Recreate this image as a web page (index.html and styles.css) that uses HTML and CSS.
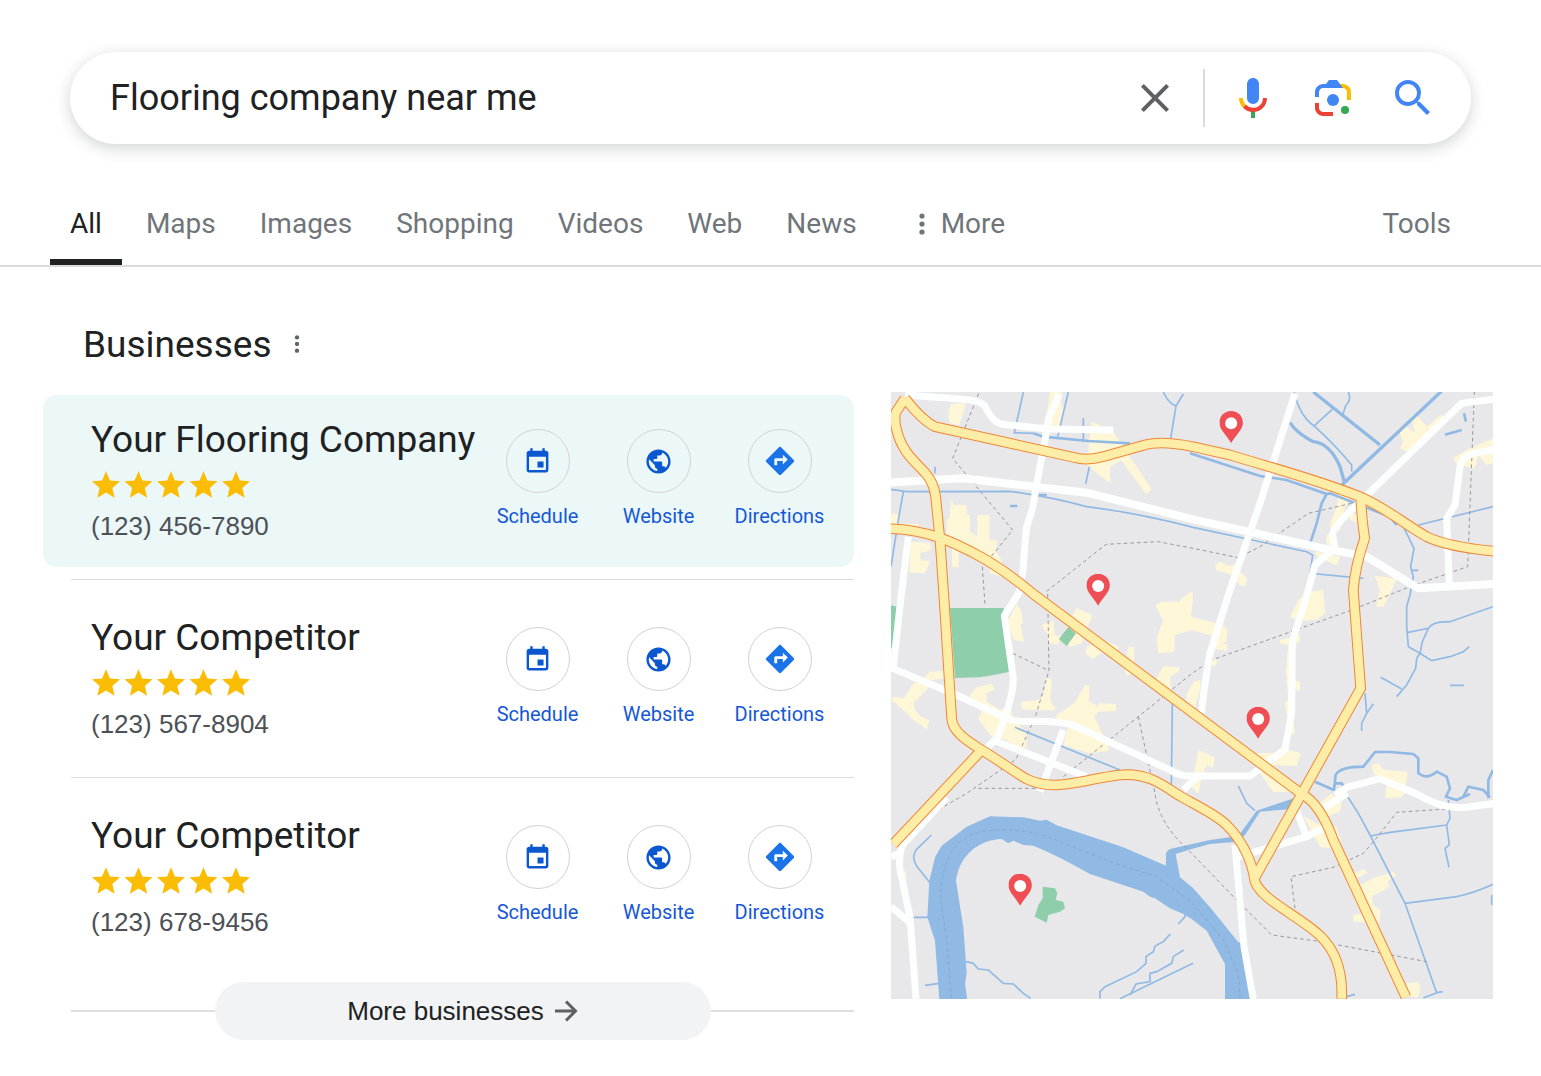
FILE: index.html
```
<!DOCTYPE html>
<html lang="en">
<head>
    <meta charset="UTF-8">
    <meta name="viewport" content="width=device-width, initial-scale=1.0">
    <title>Flooring company near me</title>
    <link rel="stylesheet" href="styles.css">
</head>
<body>

    <!-- Shared icons -->
    <svg class="sprite" aria-hidden="true">
        <symbol id="icon-schedule" viewBox="0 0 24 24">
            <path d="M17 12h-5v5h5v-5zM16 1v2H8V1H6v2H5c-1.11 0-1.99.9-1.99 2L3 19c0 1.1.89 2 2 2h14c1.1 0 2-.9 2-2V5c0-1.1-.9-2-2-2h-1V1h-2zm3 18H5V8h14v11z"/>
        </symbol>
        <symbol id="icon-website" viewBox="0 0 24 24">
            <path d="M12 2C6.48 2 2 6.48 2 12s4.48 10 10 10 10-4.48 10-10S17.52 2 12 2zm-1 17.93c-3.95-.49-7-3.85-7-7.93 0-.62.08-1.21.21-1.79L9 15v1c0 1.1.9 2 2 2v1.93zm6.9-2.54c-.26-.81-1-1.39-1.9-1.39h-1v-3c0-.55-.45-1-1-1H8v-2h2c.55 0 1-.45 1-1V7h2c1.1 0 2-.9 2-2v-.41c2.93 1.19 5 4.06 5 7.41 0 2.08-.8 3.97-2.1 5.39z"/>
        </symbol>
        <symbol id="icon-directions" viewBox="0 0 24 24">
            <path d="M21.71 11.29l-9-9c-.39-.39-1.02-.39-1.41 0l-9 9c-.39.39-.39 1.02 0 1.41l9 9c.39.39 1.02.39 1.41 0l9-9c.39-.38.39-1.01 0-1.41zM14 14.5V12h-4v3H8v-4c0-.55.45-1 1-1h5V7.5l3.5 3.5-3.5 3.5z"/>
        </symbol>
        <symbol id="star" viewBox="2 2 20 19">
            <path d="M12 17.27L18.18 21l-1.64-7.03L22 9.24l-7.19-.61L12 2 9.19 8.63 2 9.24l5.46 4.73L5.82 21z"/>
        </symbol>
        <symbol id="stars" viewBox="0 0 158 28">
            <use href="#star" x="0" width="28" height="27"/>
            <use href="#star" x="32.5" width="28" height="27"/>
            <use href="#star" x="65" width="28" height="27"/>
            <use href="#star" x="97.5" width="28" height="27"/>
            <use href="#star" x="130" width="28" height="27"/>
        </symbol>
        <symbol id="dots" viewBox="0 0 6 24">
            <circle cx="3" cy="4" r="2.6"/>
            <circle cx="3" cy="12" r="2.6"/>
            <circle cx="3" cy="20" r="2.6"/>
        </symbol>
    </svg>

    <header>
        <form class="search">
            <input class="search-input" type="text" value="Flooring company near me" aria-label="Search">
            <button class="search-btn clear" type="button" aria-label="Clear">
                <svg viewBox="0 0 24 24"><path fill="#5f6062" d="M19 6.41L17.59 5 12 10.59 6.41 5 5 6.41 10.59 12 5 17.59 6.41 19 12 13.41 17.59 19 19 17.59 13.41 12z"/></svg>
            </button>
            <button class="search-btn" type="button" aria-label="Search by voice">
                <svg viewBox="0 0 24 24">
                    <path fill="#4285f4" d="M12 15c1.66 0 3-1.31 3-2.97V5.01C15 3.34 13.66 2 12 2S9 3.34 9 5.01v7.02C9 13.69 10.34 15 12 15z"/>
                    <path fill="#34a853" d="M11 18.08h2V22h-2z"/>
                    <path fill="#fbbc05" d="M7.05 16.87C5.78 15.54 5 14.04 5 12h2c0 1.45.56 2.42 1.47 3.38v.32l-1.15 1.18z"/>
                    <path fill="#ea4335" d="M12 16.93a4.97 5.25 0 0 1-3.54-1.55l-1.41 1.49C8.31 18.21 10.07 19 12 19c3.87 0 6.99-2.92 6.99-7H17c0 2.92-2.24 4.93-5 4.93z"/>
                </svg>
            </button>
            <button class="search-btn" type="button" aria-label="Search by image">
                <svg viewBox="0 0 192 192">
                    <circle fill="#34a853" cx="144" cy="144" r="16"/>
                    <circle fill="#4285f4" cx="96" cy="104" r="24"/>
                    <path fill="#ea4335" d="M24 135.2C24 153.3 38.7 168 56.8 168H96v-16l-40.1-.1c-8.8 0-15.9-8.2-15.9-17.9v-18H24z"/>
                    <path fill="#fbbc04" d="M168 72.8C168 54.7 153.3 40 135.2 40H116l20 16c8.8 0 15.9 8.3 15.9 18v30h16z"/>
                    <path fill="#4285f4" d="M112 24H80L68 40H56.8C38.7 40 24 54.7 24 72.8V92h16V74c0-9.7 7.1-18 15.9-18H136z"/>
                </svg>
            </button>
            <button class="search-btn" type="submit" aria-label="Search">
                <svg viewBox="0 0 24 24"><path fill="#4285f4" d="M15.5 14h-.79l-.28-.27A6.47 6.47 0 0 0 16 9.500 6.500 6.500 0 1 0 9.500 16c1.610 0 3.090-.59 4.230-1.570l.27.28v.79l5 4.990L20.490 19l-4.990-5zm-6 0C7.010 14 5 11.990 5 9.500S7.010 5 9.500 5 14 7.010 14 9.500 11.990 14 9.500 14z"/></svg>
            </button>
        </form>

        <nav class="tabs">
            <a class="tab active" href="#">All</a>
            <a class="tab" href="#">Maps</a>
            <a class="tab" href="#">Images</a>
            <a class="tab" href="#">Shopping</a>
            <a class="tab" href="#">Videos</a>
            <a class="tab" href="#">Web</a>
            <a class="tab" href="#">News</a>
            <button class="tab more" type="button"><svg class="tab-dots"><use href="#dots"/></svg>More</button>
            <button class="tab tools" type="button">Tools</button>
        </nav>
    </header>

    <main class="results">
        <section class="businesses">
            <div class="heading">
                <h1>Businesses</h1>
                <button class="menu-btn" type="button" aria-label="Options"><svg><use href="#dots"/></svg></button>
            </div>

            <article class="business featured">
                <div class="info">
                    <h2>Your Flooring Company</h2>
                    <svg class="stars" role="img" aria-label="5 stars"><use href="#stars"/></svg>
                    <p>(123) 456-7890</p>
                </div>
                <div class="actions">
                    <a href="#"><span class="circle"><svg><use href="#icon-schedule"/></svg></span>Schedule</a>
                    <a href="#"><span class="circle"><svg><use href="#icon-website"/></svg></span>Website</a>
                    <a href="#"><span class="circle directions"><svg><use href="#icon-directions"/></svg></span>Directions</a>
                </div>
            </article>
            <hr>
            <article class="business">
                <div class="info">
                    <h2>Your Competitor</h2>
                    <svg class="stars" role="img" aria-label="5 stars"><use href="#stars"/></svg>
                    <p>(123) 567-8904</p>
                </div>
                <div class="actions">
                    <a href="#"><span class="circle"><svg><use href="#icon-schedule"/></svg></span>Schedule</a>
                    <a href="#"><span class="circle"><svg><use href="#icon-website"/></svg></span>Website</a>
                    <a href="#"><span class="circle directions"><svg><use href="#icon-directions"/></svg></span>Directions</a>
                </div>
            </article>
            <hr>
            <article class="business">
                <div class="info">
                    <h2>Your Competitor</h2>
                    <svg class="stars" role="img" aria-label="5 stars"><use href="#stars"/></svg>
                    <p>(123) 678-9456</p>
                </div>
                <div class="actions">
                    <a href="#"><span class="circle"><svg><use href="#icon-schedule"/></svg></span>Schedule</a>
                    <a href="#"><span class="circle"><svg><use href="#icon-website"/></svg></span>Website</a>
                    <a href="#"><span class="circle directions"><svg><use href="#icon-directions"/></svg></span>Directions</a>
                </div>
            </article>

            <div class="more-row">
                <button class="more-btn" type="button">
                    More businesses
                    <svg viewBox="0 0 24 24"><path d="M1 12h20M12 2.500L21.500 12L12 21.500" fill="none" stroke="#5f6062" stroke-width="3"/></svg>
                </button>
            </div>
        </section>

        <svg class="map" viewBox="3 6 1806 1821" role="img" aria-label="Map of businesses">
            <defs>
                <symbol id="pin" viewBox="0 0 70 96">
                    <path fill="#f04e55" d="M35 0C15 0 0 15 0 35c0 22 20 34 35 61 15-27 35-39 35-61C70 15 55 0 35 0z"/>
                    <circle fill="#fff" cx="35" cy="37" r="18"/>
                </symbol>
                <g id="main-roads">
                    <path d="M45 25L17 68Q12 90 20 120C35 185 75 215 105 248Q132 278 137 320L150 450L163 640L185 985C187 1030 245 1060 275 1080C340 1120 380 1150 410 1167C470 1195 520 1185 590 1172C650 1160 680 1154 710 1154C790 1154 830 1195 875 1221C930 1252 980 1275 1010 1305C1050 1345 1085 1405 1095 1475C1115 1530 1230 1580 1290 1637C1345 1690 1358 1755 1355 1826"/>
                    <path d="M-5 416C110 418 190 455 275 502C330 533 380 570 430 612L1235 1212Q1290 1240 1330 1350L1548 1822"/>
                    <path d="M45 25Q95 90 135 110L555 203Q590 213 640 200L760 166Q810 150 909 170L1020 195C1150 235 1270 265 1410 320C1490 355 1540 400 1610 440Q1670 470 1815 484"/>
                    <path d="M1412 325Q1417 400 1424 445Q1395 530 1390 600L1412 895L1095 1462"/>
                    <path d="M275 1080L10 1362"/>
                </g>
            </defs>

            <rect x="3" y="6" width="1806" height="1821" fill="#e8e8ea"/>

            <!-- Built-up areas -->
            <g fill="#fef7d7">
                <path d="M183 42L228 38L208 106L178 98L175 70zM480 6L515 6L512 40L522 62L508 108L460 106L472 62z"/>
                <path d="M605 95L670 125L710 185L785 298L768 312L693 210L660 232V280L590 225z"/>
                <path d="M183 327L192 345L230 346V373L240 376V425L265 440V495L206 480V532L186 530V445L170 443V388L178 386zM262 376L298 374V450L322 452L318 485L335 512V560L300 550V510L262 475zM3 372L30 370L25 400L85 402L80 425L3 420z"/>
                <path d="M62 455L120 458L123 480L90 490L92 512L120 512L105 550L58 548z"/>
                <path d="M350 700L380 642L395 665L398 700L390 705L403 755L372 750L360 720zM455 705L490 692L494 735L512 738L505 762L475 760L474 735zM560 655L607 675L590 720L575 760L538 770L515 740zM590 770L640 750L685 768L682 790L638 785L608 808L586 790zM714 772L733 770L731 838L712 860L704 840z"/>
                <path d="M795 645L815 635L868 635L880 620L908 603V630L903 680L1000 705L1013 722L1008 755L995 762L1012 762V782L960 775L975 740L905 720L855 735L853 785L805 790L800 745L820 690z"/>
                <path d="M120 845L162 842V866L120 870L115 893L70 940L75 960L90 978L118 990L110 1017L70 990L40 960L5 930L8 920L42 925L70 880L90 875z"/>
                <path d="M240 915L260 892L305 882L314 898L290 910V935L330 960L360 945L370 985L410 1030V1072L390 1075L350 1050L300 1035L265 985L275 965L250 940z"/>
                <path d="M395 935L445 930L460 915L470 865L485 867L480 930L497 955L490 962L395 958zM500 975L555 937L585 885L597 887V935L625 950V940L678 942V962L625 965L612 980L625 1005L640 1040L655 1065V1082L600 1090L520 1065L535 1010L500 995z"/>
                <path d="M780 880L800 865L820 828L868 832V842L840 860L845 930L780 890zM890 910L912 875L932 870L930 900L910 965L890 935z"/>
                <path d="M975 525L990 515L1018 528L1050 518V545L1072 565L1065 588L1048 585L1030 555L978 540zM1345 305L1383 318L1365 352L1348 425L1318 410L1340 350zM1380 370L1440 385L1425 405L1380 390zM1275 485L1350 500L1340 525L1285 505zM1310 435H1330L1340 475L1310 465zM1370 487L1400 485L1390 500z"/>
                <path d="M1522 115L1545 108L1575 130L1562 78L1585 82L1612 110L1650 75L1670 80L1590 155L1565 190L1530 175L1540 155zM1690 205L1730 180L1809 145V220L1790 225L1765 195L1755 235L1700 225zM1455 558L1520 565L1510 590L1480 650L1458 650L1470 600z"/>
                <path d="M1255 605L1300 600L1305 670L1280 690L1230 692L1200 680L1225 630zM1170 750L1230 735L1230 755L1210 765V870L1230 875V900L1210 902V990L1215 1030L1200 1035L1185 940L1195 930L1188 840L1195 765L1170 760zM960 805L982 810L978 828L955 825z"/>
                <path d="M925 1080L975 1102L968 1135L950 1125L935 1160L925 1212L905 1190zM1100 1090L1160 1088L1178 1075L1232 1090L1220 1128L1150 1125L1195 1180L1230 1205L1150 1206L1110 1150z"/>
                <path d="M1445 1125L1465 1120L1482 1140L1553 1145L1545 1210L1535 1222L1485 1225L1490 1185L1450 1150zM1290 1240L1325 1210L1355 1240L1350 1265L1310 1280zM1240 1278L1300 1310L1340 1310L1355 1360L1320 1375L1290 1370zM1390 1452L1420 1436L1432 1448L1400 1465zM1410 1485L1450 1465L1510 1445L1518 1455L1492 1475L1500 1490L1445 1520L1450 1545L1472 1560L1468 1600L1390 1595V1575L1420 1570z"/>
                <path d="M1550 1780L1585 1777L1592 1795L1585 1822L1560 1820zM40 1440L50 1450L45 1485z"/>
            </g>

            <!-- Parks -->
            <g fill="#8fceaa">
                <path d="M180 654H342L335 680L358 845Q300 858 265 862L195 864zM3 646L22 650L8 770L3 775z"/>
                <path d="M535 710L558 730L530 769L507 747z"/>
                <path d="M458 1490L495 1495L502 1510L497 1530L520 1535L525 1555L510 1565L475 1575L470 1598L434 1580L445 1545L458 1525z"/>
            </g>

            <!-- River -->
            <path fill="#90bae4" d="M148 1830L135 1652L112 1582L118 1472L135 1402L155 1367L230 1310L300 1279L400 1282L450 1292L470 1289L500 1306L700 1372L828 1427V1392Q830 1378 850 1375L960 1350L1045 1338L1100 1262L1220 1222L1230 1232L1195 1258L1110 1265L1065 1335L1040 1355L960 1362L905 1377L857 1392L870 1462L909 1494L960 1552L1045 1657H1060V1690L1085 1830H1005V1722L950 1622L905 1587L880 1572L840 1555L795 1525L780 1520L760 1505L600 1452Q500 1395 430 1367L400 1365L370 1352L355 1360L335 1347C270 1350 210 1390 198 1472L220 1612L230 1750L225 1780L232 1830z"/>

            <!-- Streams -->
            <g class="streams">
                <path class="canal" d="M1270 6L1470 165M1655 3L1350 290"/>
                <path d="M400 6L373 128L430 130M535 6L503 140M580 85V155M1212 6Q1230 80 1275 110Q1340 170 1385 225V245M1330 55L1270 110M1375 6Q1385 30 1368 45L1358 75M3 298L50 305L360 304Q480 320 590 350Q750 370 909 412L1250 485L1268 495L1260 550L1420 565M40 305L25 390L3 530M598 230L587 282M375 1012L690 1140M847 940L844 1185M820 6Q835 40 858 48L842 145M880 12L858 48M135 230V250"/>
                <path class="brook" d="M430 130L460 140L595 153L720 160M360 348H382M430 315H470M900 190L1110 258L1190 270L1310 312L1320 310L1500 380L1520 405M1665 134L1715 120M1722 70L1728 95M1310 312L1295 340L1280 400L1262 455"/>
                <path class="canal" d="M1200 98Q1220 130 1270 155Q1320 160 1350 230L1363 275"/>
                <path d="M1585 405L1809 350M1540 410L1572 475L1562 530L1570 560L1560 615L1550 650V710L1555 770L1590 790L1625 812L1680 800L1720 785L1738 770M1550 728L1615 715L1625 705Q1640 695 1680 695L1809 650M1615 715L1597 755L1590 790L1580 805L1577 835L1550 885L1520 920M1472 862L1535 897M1680 886H1722M1425 910L1430 970L1415 1000V1022M1430 970L1450 942M1562 541H1585"/>
                <path class="brook" d="M1275 1175L1332 1200L1337 1155Q1350 1130 1420 1130L1440 1105L1455 1086H1500L1570 1092L1585 1105V1150Q1610 1170 1640 1145L1670 1160L1680 1195L1668 1220L1700 1230L1740 1212M1720 1220L1735 1190L1780 1200L1800 1222M1809 1140L1795 1170V1225M1337 1180H1355L1362 1190"/>
                <path d="M1045 1188L1070 1240L1095 1262M1370 1215L1405 1270L1440 1335L1545 1540L1640 1808L1600 1824M1440 1338L1500 1327L1670 1305L1680 1285L1675 1230M1670 1305L1678 1365L1665 1375L1677 1432M1545 1540L1700 1520Q1750 1510 1809 1483M1640 1808L1658 1805M1805 1515V1545M1370 1820L1395 1813"/>
                <path d="M124 1335L80 1378Q60 1400 85 1435L120 1478M70 1582H115M228 1715L250 1720L265 1737L295 1740L320 1762L340 1780L370 1782L400 1810L422 1825M105 1786L148 1780M630 1826V1805L645 1790L740 1745L768 1720V1700L790 1685L795 1668L820 1655L841 1632M720 1815L738 1782L780 1775V1750L800 1745L845 1720L850 1700L881 1680M690 1826L909 1720M865 1602L885 1580V1565"/>
            </g>

            <!-- District borders -->
            <g class="borders">
                <path d="M266 10L188 205L368 420L303 500M277 530L285 645M470 604L648 463L805 455L909 475L1045 503L1110 470L1255 370L1385 340"/>
                <path d="M473 612L477 840L438 975L378 1108L230 1210L135 1265M368 790L477 842M520 1160L745 980L900 855L960 812L1385 660L1560 590L1733 530L1753 6M745 980L795 1210Q805 1300 900 1385L1035 1525L1145 1635L1280 1653M265 1195H450M1345 1665L1610 1715M1215 1555L1203 1460L1330 1432L1420 1390L1455 1350L1520 1267L1670 1257"/>
                <path class="river-line" d="M184 1825L170 1650L152 1530Q155 1330 300 1322Q420 1310 520 1360L680 1422L800 1460L909 1540L1000 1650L1045 1750L1050 1826"/>
            </g>

            <!-- Streets -->
            <g class="streets">
                <path d="M45 15L220 28Q270 32 285 48C305 90 320 103 350 104L475 117L670 120"/>
                <path d="M508 12L478 80L435 310Q433 345 410 410Q405 450 402 500Q398 570 385 612L343 677L370 865Q370 900 355 950L325 1038L290 1075"/>
                <path d="M-5 278L220 265L590 308L909 388L1300 475L1430 500L1585 595L1815 582" class="wide"/>
                <path d="M55 440L32 630L10 830M-5 830L200 915L340 980Q370 998 440 994Q520 994 560 1010L840 1140Q870 1160 909 1158H1080L1185 1078L1205 970L1207 755L1255 600L1275 525L1335 475L1327 430Q1340 400 1400 345L1715 40L1815 27"/>
                <path d="M1215 10L1110 340L1020 600L960 790Q940 900 935 970M1815 178L1750 190Q1715 200 1710 230L1695 345L1670 385L1678 590"/>
                <path d="M315 1052L590 1160M520 1020L450 1205M920 1162L880 1200M1335 1215L1370 1192L1470 1166L1580 1212Q1660 1260 1730 1252L1815 1240M1372 1210L1300 1255M1220 1262L1250 1340M1300 1315L1250 1340L1040 1402M1035 1365L1062 1670L1090 1828"/>
                <path d="M170 1222L40 1362Q25 1390 30 1440L60 1580L78 1826M3 1550L60 1598M3 1400L30 1390"/>
            </g>

            <!-- Main roads: casing, then fill -->
            <use class="casing" href="#main-roads"/>
            <use class="surface" href="#main-roads"/>

            <use href="#pin" x="988" y="63" width="71" height="96"/>
            <use href="#pin" x="589" y="551" width="71" height="96"/>
            <use href="#pin" x="1069" y="950" width="71" height="96"/>
            <use href="#pin" x="355" y="1451" width="71" height="96"/>
        </svg>
    </main>

</body>
</html>
```
FILE: styles.css
```
* {
    box-sizing: border-box;
}

body {
    margin: 0;
    background: #fff;
    color: #202122;
    font-family: Roboto, "Liberation Sans", sans-serif;
}

a {
    color: inherit;
    text-decoration: none;
}

button {
    border: 0;
    padding: 0;
    background: none;
    color: inherit;
    font: inherit;
    cursor: pointer;
}

svg {
    display: block;
}

.sprite {
    position: absolute;
    width: 0;
    height: 0;
}

/* Search bar */
.search {
    display: flex;
    align-items: center;
    gap: 32px;
    height: 92px;
    margin: 52px 70px 0;
    padding: 0 34px 0 40px;
    border-radius: 46px;
    background: #fff;
    box-shadow: 0 4px 16px rgba(32, 33, 36, 0.2);
}

.search-input {
    flex: 1;
    min-width: 0;
    padding: 0;
    border: 0;
    outline: 0;
    background: none;
    color: inherit;
    font-family: inherit;
    font-size: 36px;
}

.search-btn svg {
    width: 48px;
    height: 48px;
}

.clear {
    display: flex;
    align-items: center;
    gap: 24px;
    margin-right: -8px;
}

.clear::after {
    content: "";
    width: 2px;
    height: 58px;
    background: #dadce0;
}

/* Tabs */
.tabs {
    display: flex;
    gap: 44px;
    height: 123px;
    padding: 0 90px 0 50px;
    border-bottom: 2px solid #dadce0;
    color: #70757a;
    font-size: 28px;
    line-height: 32px;
}

.tab {
    display: flex;
    align-items: center;
    padding-top: 38px;
}

.active {
    margin-right: -20px;
    padding: 44px 20px 0;
    border-bottom: 6px solid #202122;
    color: #202122;
}

.more {
    gap: 16px;
    margin-left: 18px;
}

.tab-dots {
    width: 6px;
    height: 24px;
    fill: #70757a;
}

.tools {
    margin-left: auto;
}

/* Results */
.results {
    display: grid;
    grid-template-columns: 811fr 602fr;
    gap: 37px;
    align-items: start;
    padding: 50px 48px 36px 43px;
}

.heading {
    display: flex;
    align-items: center;
    gap: 20px;
    height: 54px;
    margin-bottom: 24px;
    padding-left: 40px;
}

h1,
h2,
p {
    margin: 0;
    font-weight: 400;
}

h1 {
    font-size: 37px;
}

.menu-btn svg {
    width: 10px;
    height: 20px;
    fill: #5f6368;
}

.business {
    display: flex;
    justify-content: space-between;
    height: 172px;
    padding: 24px 14px 0 48px;
    border-radius: 14px;
}

.featured {
    background: #ecf8f8;
}

.info {
    display: flex;
    flex-direction: column;
    white-space: nowrap;
}

.info h2 {
    font-size: 37px;
    line-height: 42px;
}

.stars {
    width: 158px;
    height: 28px;
    margin: 10px 0 12px 1px;
    fill: #fbbc04;
}

.info p {
    color: #4d5156;
    font-family: "Liberation Sans", Arial, sans-serif;
    font-size: 26px;
    line-height: 30px;
}

.actions {
    display: flex;
    padding-top: 10px;
    color: #1558d6;
    font-size: 20px;
    line-height: 24px;
}

.actions a {
    display: flex;
    flex-direction: column;
    align-items: center;
    gap: 11px;
    width: 121px;
}

.circle {
    display: flex;
    align-items: center;
    justify-content: center;
    width: 64px;
    height: 64px;
    border: 1px solid #d2d2d6;
    border-radius: 50%;
}

.circle svg {
    width: 29px;
    height: 29px;
    fill: #0b57d0;
}

.directions svg {
    width: 34px;
    height: 34px;
    fill: #1a73e8;
}

hr {
    height: 1px;
    margin: 12px 0 13px 28px;
    border: 0;
    background: #dadce0;
}

.more-row {
    display: flex;
    align-items: center;
    margin: 19px 0 0 28px;
}

.more-row::before,
.more-row::after {
    content: "";
    flex: 1;
    height: 2px;
    background: #dfdfe0;
}

.more-btn {
    display: flex;
    align-items: center;
    justify-content: center;
    gap: 10px;
    width: 496px;
    height: 58px;
    border-radius: 29px;
    background: #f1f3f4;
    font-family: "Liberation Sans", Arial, sans-serif;
    font-size: 26px;
}

.more-btn svg {
    width: 24px;
    height: 24px;
}

/* Map */
.map {
    width: 100%;
    height: auto;
    margin-top: 75px;
}

.streams {
    fill: none;
    stroke: #90bae4;
    stroke-width: 5px;
}

.brook {
    stroke-width: 8px;
}

.canal {
    stroke-width: 10px;
}

.borders {
    fill: none;
    stroke: #98989a;
    stroke-width: 3px;
    stroke-dasharray: 11 9;
}

.river-line {
    stroke: #7fa9d3;
}

.streets {
    fill: none;
    stroke: #fdfefe;
    stroke-width: 21px;
    stroke-linejoin: round;
}

.wide {
    stroke-width: 24px;
}

.casing {
    fill: none;
    stroke: #ef8636;
    stroke-width: 32px;
}

.surface {
    fill: none;
    stroke: #feeda7;
    stroke-width: 26px;
}
```
